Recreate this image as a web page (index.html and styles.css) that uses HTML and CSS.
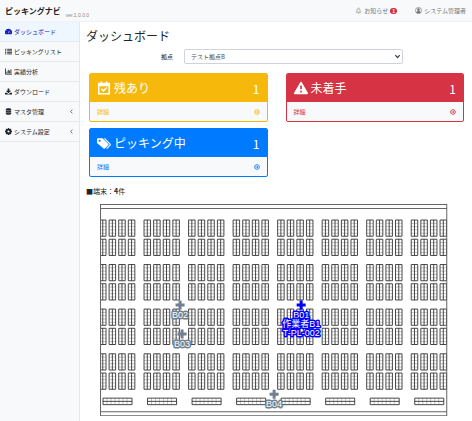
FILE: index.html
```html
<!DOCTYPE html>
<html lang="ja">
<head>
<meta charset="utf-8">
<meta name="viewport" content="width=device-width, initial-scale=1">
<title>ピッキングナビ</title>
<link rel="stylesheet" href="styles.css">
</head>
<body>
<header class="topbar">
  <a class="brand" href="#">ピッキングナビ</a>
  <span class="version">ver.1.0.0.0</span>
  <nav class="user-nav">
    <a href="#"><svg class="icon" viewBox="0 0 16 16"><path d="M8 1v1.500M3 12c1-1 1.500-2 1.500-5a3.500 3.500 0 0 1 7 0c0 3 .5 4 1.500 5zM6.500 14h3" fill="none" stroke="currentColor" stroke-width="1.300"/></svg>お知らせ<span class="badge">1</span></a>
    <a href="#"><svg class="icon" viewBox="0 0 16 16"><circle cx="8" cy="8" r="7" fill="none" stroke="currentColor" stroke-width="1.500"/><circle cx="8" cy="6" r="3" fill="currentColor"/><path d="M3 13c0-3 2-4 5-4s5 1 5 4l-2 1.500H5z" fill="currentColor"/></svg>システム管理者</a>
  </nav>
</header>
<div class="layout">
  <nav class="sidebar">
    <a class="active" href="#"><svg class="icon" viewBox="0 0 16 16"><path d="M8 2a8 8 0 0 0-7 12h14A8 8 0 0 0 8 2z" fill="currentColor"/><path d="M8 12l2-6M3.500 10h1M5 6l.7.7M11.500 10h1" stroke="#fff" stroke-width="1.400"/></svg>ダッシュボード</a>
    <a href="#"><svg class="icon" viewBox="0 0 16 16"><path d="M0 3h3M5 3h11M0 6.500h3M5 6.500h11M0 10h3M5 10h11M0 13.500h3M5 13.500h11" stroke="currentColor" stroke-width="2"/></svg>ピッキングリスト</a>
    <a href="#"><svg class="icon" viewBox="0 0 16 16"><path d="M1 1v13h15M4.500 12V8M7.500 12V4M10.500 12V6M13.500 12V3" fill="none" stroke="currentColor" stroke-width="2"/></svg>実績分析</a>
    <a href="#"><svg class="icon" viewBox="0 0 16 16"><path d="M6 1h4v5h4l-6 6-6-6h4zM0 11h4l4 3 4-3h4v4H0z" fill="currentColor"/></svg>ダウンロード</a>
    <a href="#"><svg class="icon" viewBox="0 0 16 16"><path d="M2 3c0-3 12-3 12 0v10c0 3-12 3-12 0z" fill="currentColor"/><path d="M2 5c3 2 9 2 12 0M2 9.500c3 2 9 2 12 0" fill="none" stroke="#f8f9fa"/></svg>マスタ管理<svg class="arrow" viewBox="0 0 8 8"><path d="M5.500 1l-3 3 3 3" fill="none" stroke="currentColor"/></svg></a>
    <a href="#"><svg class="icon" viewBox="0 0 16 16"><circle cx="8" cy="8" r="4.500" fill="none" stroke="currentColor" stroke-width="4"/><path d="M8 0v3M8 13v3M0 8h3M13 8h3M2.300 2.300l2 2M11.700 11.700l2 2M2.300 13.700l2-2M11.700 4.300l2-2" stroke="currentColor" stroke-width="3"/></svg>システム設定<svg class="arrow" viewBox="0 0 8 8"><path d="M5.500 1l-3 3 3 3" fill="none" stroke="currentColor"/></svg></a>
  </nav>
  <main class="content">
    <h1>ダッシュボード</h1>
    <form class="filter">
      <label for="site">拠点</label>
      <div class="select-wrap">
        <select id="site"><option>テスト拠点B</option></select>
        <svg class="chevron" viewBox="0 0 8 8"><path d="M1.500 2.500L4 5.200l2.500-2.700" fill="none" stroke="#343a40" stroke-width="1.400"/></svg>
      </div>
    </form>
    <div class="cards">
      <section class="card warning">
        <div class="card-head"><svg class="card-icon" viewBox="0 0 16 16"><path d="M2 3h12v11.500H2zM2 5h12M5 .5v3M11 .5v3" fill="none" stroke="currentColor" stroke-width="1.800"/><path d="M5 9l2.300 2.300L11.300 7.500" fill="none" stroke="currentColor" stroke-width="1.700"/></svg><h2>残あり</h2><span class="count">1</span></div>
        <a class="card-foot" href="#">詳細<svg class="go" viewBox="0 0 12 12"><circle cx="6" cy="6" r="4.700" fill="none" stroke="currentColor" stroke-width="1.700"/><path d="M3 6h5M6 3.800L8.200 6 6 8.200" fill="none" stroke="currentColor" stroke-width="1.500"/></svg></a>
      </section>
      <section class="card danger">
        <div class="card-head"><svg class="card-icon" viewBox="0 0 16 16"><path d="M8 1.800L15 14H1z" fill="currentColor" stroke="currentColor" stroke-width="2" stroke-linejoin="round"/><path d="M8 5v4.500M8 11v2" stroke="#d63344" stroke-width="1.900"/></svg><h2>未着手</h2><span class="count">1</span></div>
        <a class="card-foot" href="#">詳細<svg class="go" viewBox="0 0 12 12"><circle cx="6" cy="6" r="4.700" fill="none" stroke="currentColor" stroke-width="1.700"/><path d="M3 6h5M6 3.800L8.200 6 6 8.200" fill="none" stroke="currentColor" stroke-width="1.500"/></svg></a>
      </section>
      <section class="card primary">
        <div class="card-head"><svg class="card-icon" viewBox="0 0 16 16"><path d="M0 3.500Q0 2.500 1 2.500h5.500L13 9q.7.700 0 1.400L9 14.400q-.7.600-1.400 0L0 8z" fill="currentColor"/><circle cx="3" cy="5.500" r="1.200" fill="#007bff"/><path d="M8.500 2.800l6.500 6.400q.6.600 0 1.200l-4 4" fill="none" stroke="currentColor" stroke-width="1.300"/></svg><h2>ピッキング中</h2><span class="count">1</span></div>
        <a class="card-foot" href="#">詳細<svg class="go" viewBox="0 0 12 12"><circle cx="6" cy="6" r="4.700" fill="none" stroke="currentColor" stroke-width="1.700"/><path d="M3 6h5M6 3.800L8.200 6 6 8.200" fill="none" stroke="currentColor" stroke-width="1.500"/></svg></a>
      </section>
    </div>
    <p class="devices">■端末：<span>4</span>件</p>
    <svg class="floor" viewBox="0 0 349 212" role="img" aria-label="フロアマップ">
      <defs>
        <clipPath id="area"><path d="M1 0h347v212H1z"/></clipPath>
        <g id="rack">
          <path d="M0 3.300h6.500M0 6.600h6.500M0 9.900h6.500M0 13.200h6.500" stroke="#b5b5b5" stroke-width=".8"/>
          <path d="M0 0h6.500v16.200H0zM3.250 0v16.200" fill="none" stroke="#333" stroke-width=".9"/>
        </g>
        <g id="pair"><use href="#rack"/><use href="#rack" y="19.200"/></g>
        <g id="block"><use href="#pair"/><use href="#pair" x="9.600"/><use href="#pair" x="19.200"/><use href="#pair" x="28.800"/></g>
        <g id="column">
          <use href="#block" y="16"/><use href="#block" y="60.500"/><use href="#block" y="105"/><use href="#block" y="149.700"/>
          <path d="M7.500 194v6.500M11.500 194v6.500M15.500 194v6.500M19.500 194v6.500M23.500 194v6.500M27.500 194v6.500" stroke="#b5b5b5" stroke-width=".8"/>
          <path d="M3.500 194h29v6.500h-29zM3.500 197.200h29" fill="none" stroke="#333" stroke-width=".9"/>
        </g>
        <path id="plus" d="M-4.500 0h9M0-4.500v9" stroke-width="3"/>
      </defs>
      <g clip-path="url(#area)">
        <use href="#column" x="0.500"/><use href="#column" x="45"/><use href="#column" x="89.500"/><use href="#column" x="134"/><use href="#column" x="178.500"/><use href="#column" x="223"/><use href="#column" x="267.500"/><use href="#column" x="312"/>
      </g>
      <path d="M1.500 .5h346v211H1.500zM1.500 4.500h346M1.500 207.500h346" fill="none" stroke="#666"/>
      <g class="marker idle">
        <use href="#plus" x="81" y="101"/><text x="81" y="114">B02</text>
        <use href="#plus" x="83" y="130"/><text x="83" y="143">B03</text>
        <use href="#plus" x="175" y="190"/><text x="175" y="203">B04</text>
      </g>
      <g class="marker busy">
        <use href="#plus" x="202" y="101"/><text x="202" y="114">B01</text><text x="202" y="123">作業者B1</text><text x="202" y="132">T-PL-002</text>
      </g>
    </svg>
  </main>
</div>
</body>
</html>
```
FILE: styles.css
```css
* { box-sizing: border-box; }
body {
  margin: 0;
  min-height: 100vh;
  display: flex;
  flex-direction: column;
  background: #fff;
  color: #212529;
  font: 6px/10px "Noto Sans CJK JP", sans-serif;
}
a { color: inherit; text-decoration: none; }
h1, h2, p { margin: 0; font-weight: 400; }

.topbar {
  display: flex;
  align-items: center;
  height: 22px;
  padding: 0 6px 0 5px;
  background: #f8f9fa;
  border-bottom: 1px solid #f0f1f3;
}
.brand { font-size: 8px; font-weight: 700; }
.version { margin: 8px 0 0 5px; font: 5px/8px "Liberation Sans", sans-serif; color: #888; }
.user-nav { display: flex; gap: 18px; margin-left: auto; color: #777; }
.user-nav a { display: flex; align-items: center; gap: 2px; }
.icon { width: 7px; height: 7px; flex: none; }
.badge {
  width: 7px;
  height: 6px;
  border-radius: 3px;
  background: #d32f3f;
  color: #fff;
  font: 700 5px/6px "Liberation Sans", sans-serif;
  text-align: center;
}

.layout { flex: 1; display: flex; }
.sidebar { flex: none; width: 80px; background: #f8f9fa; border-right: 1px solid #e6e8ea; }
.sidebar a {
  display: flex;
  align-items: center;
  gap: 2px;
  height: 20px;
  padding: 0 5px;
  border-bottom: 1px solid #e6e8ea;
}
.sidebar .active { background: #eef7ff; color: #1818b8; }
.arrow { width: 5px; height: 5px; margin-left: auto; }

.content { flex: 1; min-width: 0; padding: 4px 8px 0 6px; }
h1 { font-size: 12px; line-height: 20px; }
.filter {
  display: grid;
  grid-template-columns: 23% 58%;
  column-gap: 11px;
  align-items: center;
  margin-top: 3px;
}
.filter label { text-align: right; }
.select-wrap { position: relative; }
select {
  display: block;
  width: 100%;
  height: 15px;
  padding: 0 6px;
  appearance: none;
  border: 1px solid #ced4da;
  border-radius: 2px;
  background: #fff;
  color: #495057;
  font: inherit;
}
.chevron { position: absolute; right: 2px; top: 4px; width: 7px; height: 7px; }

.cards {
  display: grid;
  grid-template-columns: 1fr 1fr;
  gap: 6px 18px;
  margin: 9px 0 0 3px;
}
.card { border: 1px solid; border-radius: 2px; overflow: hidden; background: #f8f9fa; }
.warning { color: #f6b90b; }
.danger { color: #d63344; }
.primary { color: #007bff; }
.card-head {
  display: flex;
  align-items: center;
  gap: 3px;
  height: 28px;
  padding: 0 7px;
  background: currentColor;
}
.card-head > * { color: #fff; }
.card-icon { width: 14px; height: 14px; flex: none; }
.card h2 { font-size: 12px; line-height: 20px; }
.count { margin-left: auto; padding-top: 2px; font-size: 12px; line-height: 20px; }
.card-foot { display: flex; align-items: center; justify-content: space-between; height: 19px; padding: 0 7px; }
.go { width: 6px; height: 6px; }

.devices { margin-top: 8px; font-size: 7px; line-height: 12px; }
.devices span { font-weight: 700; }
.floor { display: block; width: 92.4%; margin: 7px auto 0 13px; }
.marker text {
  font: 9px "Liberation Sans", "Noto Sans CJK JP", sans-serif;
  text-anchor: middle;
  fill: #fff;
  paint-order: stroke;
  stroke-width: 3px;
  stroke-linejoin: round;
}
.idle { stroke: #708090; }
.busy { stroke: #00f; }
```
